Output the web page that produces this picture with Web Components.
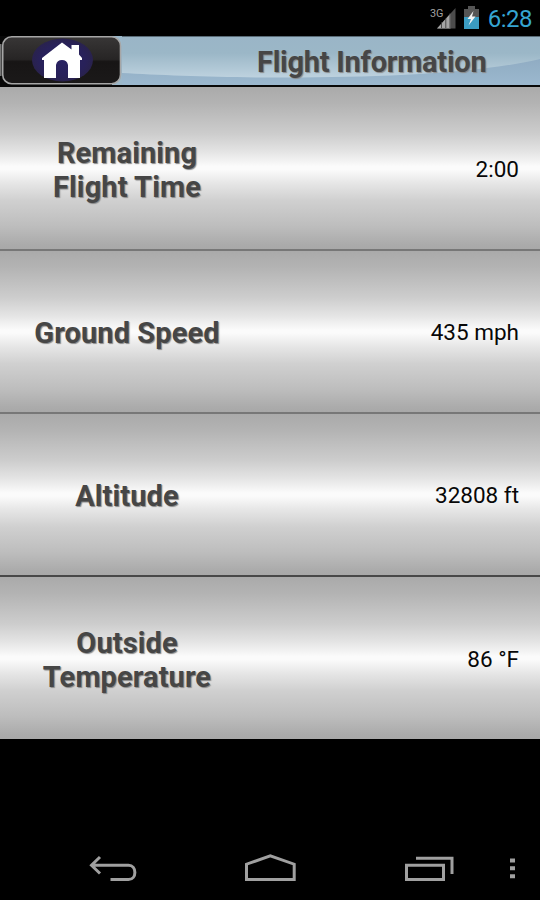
<!DOCTYPE html>
<html lang="en"><head><meta charset="utf-8"><title>Flight Information</title>
<style>html,body{margin:0;background:#000}body{font-family:Roboto,"Liberation Sans",sans-serif}</style></head><body>
<flight-app></flight-app>
<script>
const define=(name,html)=>customElements.define(name,class extends HTMLElement{
  constructor(){super();const t=document.createElement('template');t.innerHTML=html;this.attachShadow({mode:'open'}).append(t.content.cloneNode(true));}
});
define('status-bar',`<style>
:host{display:flex;height:36px;box-sizing:border-box;padding-right:8px;justify-content:flex-end;align-items:center;background:#000;color:#35a5d2;font-size:24px;line-height:36px}
svg{display:block;margin-right:8px}span{padding-top:2px;letter-spacing:-.5px}
</style><svg width="50" height="36" viewBox="430 0 50 36">
<text x="430" y="17" font-size="11.5" fill="#a2a2a2" textLength="13.5" lengthAdjust="spacingAndGlyphs">3G</text>
<path d="M437 28.5L455.5 8V28.5Z" fill="#4c4c4c"/><path d="M437 28.5L450.5 13.5V28.5Z" fill="#a5a5a5"/>
<path d="M441.5 22V28M445.8 18V28M450 13V28" stroke="#333" stroke-width=".8"/>
<path d="M464 9H468V6H475V9H479V17H464Z" fill="#555"/><path d="M464 17H479V29H464Z" fill="#3b9cc2"/>
<path d="M473.5 11L467.5 19H471L468.5 25.5L475.5 16.5H472Z" fill="#f4f4f4"/></svg><span><slot></slot></span>`);
define('home-button',`<style>
:host{display:block;width:122px;height:49px}svg{display:block}
</style><svg width="122" height="49" viewBox="0 36 122 49" role="img" aria-label="Home"><defs><linearGradient id="g" x1="0" y1="0" x2="0" y2="1"><stop stop-color="#383636"/><stop offset=".48" stop-color="#272525"/><stop offset=".53" stop-color="#171515"/><stop offset="1" stop-color="#1b1919"/></linearGradient>
<radialGradient id="b"><stop stop-color="#292263"/><stop offset=".75" stop-color="#282159"/><stop offset="1" stop-color="#29224d"/></radialGradient></defs>
<path d="M0 36H112V85H0Z" fill="#080808"/><path d="M0 44V76" stroke="#777" stroke-width="3"/>
<rect x="2.7" y="36.8" width="117.8" height="46.9" rx="9" fill="url(#g)" stroke="#a6a6a6" stroke-width="1.6"/>
<ellipse cx="62.5" cy="60" rx="30.5" ry="21.5" fill="url(#b)"/>
<path d="M42 58L62 42.5L71.5 49.5V45H79V54.5L82 58V60H80V78H68V65Q67 60 62 60Q57 60 56 65V78H44V60H42Z" fill="#fff"/></svg>`);
define('title-bar',`<style>
:host{display:grid;grid-template-columns:122px 1fr;height:51px;box-sizing:border-box;border-bottom:2px solid #080808;background:#9bb7c9}
.title{display:grid;height:49px}
.title>*{grid-area:1/1}svg{display:block}
h1{margin:0;justify-self:start;padding-left:135px;font-size:29px;line-height:53px;color:#464646;text-shadow:1px 1px 1px #888;letter-spacing:-.25px;white-space:nowrap}
</style><slot name="action"></slot><div class="title"><svg width="418" height="49" viewBox="122 36 418 49"><defs>
<linearGradient id="t" x1="0" y1="0" x2="0" y2="1"><stop stop-color="#9ab5c7"/><stop offset=".35" stop-color="#9bb7c7"/><stop offset="1" stop-color="#c8dae6"/></linearGradient>
<linearGradient id="u" x1="0" y1="0" x2="0" y2="1"><stop stop-color="#90acc3"/><stop offset="1" stop-color="#9bb8ce"/></linearGradient></defs>
<path d="M120 36H540V85H120Z" fill="url(#t)"/><path d="M120 73C220 79 440 83 540 59V85H120Z" fill="url(#u)"/><path d="M120 36.5H540" stroke="#596b76"/></svg><h1><slot></slot></h1></div>`);
define('flight-row',`<style>
:host{display:grid;grid-template-columns:254px 1fr;align-items:center;box-sizing:border-box;color:#080808;background:linear-gradient(#aaa 0,#b3b3b3 10%,#cdcdcd 29%,#e4e4e4 40%,#fbfbfb 49%,#fbfbfb 51%,#e7e7e7 59%,#d0d0d0 70%,#bdbdbd 86%,#ababab 97%,#a8a8a8 100%)}
.label{text-align:center;font-weight:700;font-size:29px;line-height:34.5px;color:#464646;text-shadow:1px 1px 1px #888;letter-spacing:.1px;padding-top:4px}
.value{text-align:right;padding-right:21px;font-size:22.5px;line-height:28px;padding-top:1px}
</style><div class="label"><slot name="label"></slot></div><div class="value"><slot></slot></div>`);
define('nav-bar',`<style>
:host{display:block;height:64px;background:#000}svg{display:block}
</style><svg width="540" height="64" viewBox="0 836 540 64" fill="none" stroke="#a0a0a0" stroke-width="3">
<path d="M91 865.3H128.5C137 865.3 137 879.5 128.5 879.5H110.5M100 857L91.5 865.3L100 873.5"/>
<path d="M246.5 879.5V864.2L270.3 855.8L294.2 864.2V879.5Z"/>
<path d="M406.5 865.3H443.5V879.5H406.5ZM416 858.3H452V874"/>
<path d="M510 858.5h5v4h-5zM510 866.3h5v4h-5zM510 874.3h5v4h-5z" fill="#a0a0a0" stroke="none"/></svg>`);
define('flight-app',`<style>
:host{display:flex;flex-direction:column;width:540px;height:900px;overflow:hidden;background:#000}
main{display:grid;grid-template-rows:164px 163px 163px 162px}
flight-row:not(:last-child){border-bottom:2px solid #777}
flight-row:nth-child(3){border-color:#484848}
nav-bar{margin-top:auto}
</style><status-bar>6:28</status-bar><title-bar><home-button slot="action"></home-button>Flight Information</title-bar>
<main><flight-row><span slot="label">Remaining<br>Flight Time</span>2:00</flight-row>
<flight-row><span slot="label">Ground Speed</span>435 mph</flight-row>
<flight-row><span slot="label">Altitude</span>32808 ft</flight-row>
<flight-row><span slot="label">Outside<br>Temperature</span>86 °F</flight-row></main><nav-bar></nav-bar>`);
</script></body></html>
